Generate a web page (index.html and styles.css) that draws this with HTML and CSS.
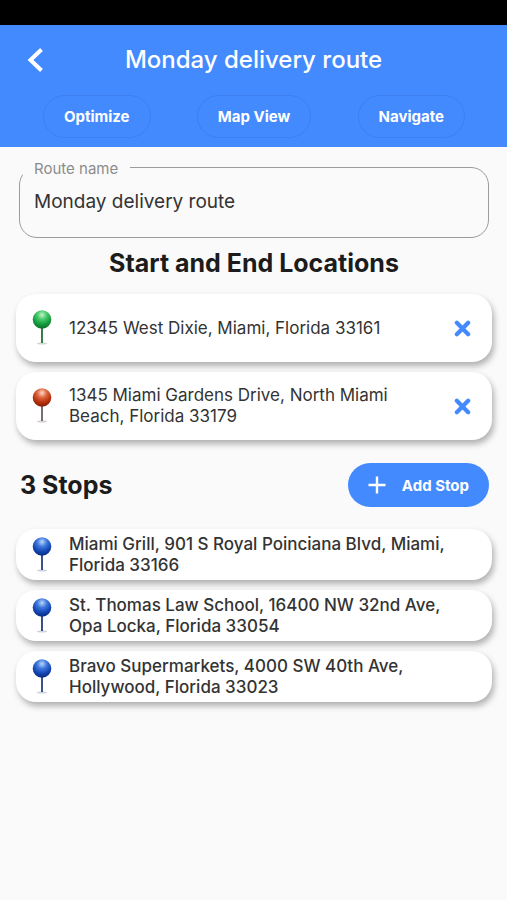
FILE: index.html
```html
<!DOCTYPE html>
<html lang="en">
<head>
<meta charset="utf-8">
<meta name="viewport" content="width=device-width, initial-scale=1">
<title>Monday delivery route</title>
<link rel="stylesheet" href="styles.css">
</head>
<body>
<svg class="defs" aria-hidden="true">
  <defs>
    <radialGradient id="ball-green" cx="0.5" cy="0.25" r="0.75">
      <stop offset="0" stop-color="#c5f3c8"/><stop offset="0.35" stop-color="#43c968"/><stop offset="0.7" stop-color="#149a3c"/><stop offset="1" stop-color="#0b6f29"/>
    </radialGradient>
    <radialGradient id="ball-red" cx="0.5" cy="0.25" r="0.75">
      <stop offset="0" stop-color="#ffd9c6"/><stop offset="0.35" stop-color="#dc6540"/><stop offset="0.7" stop-color="#b8300c"/><stop offset="1" stop-color="#7f1d05"/>
    </radialGradient>
    <radialGradient id="ball-blue" cx="0.5" cy="0.25" r="0.75">
      <stop offset="0" stop-color="#b9d6fb"/><stop offset="0.35" stop-color="#3e78dc"/><stop offset="0.7" stop-color="#1346b4"/><stop offset="1" stop-color="#082a80"/>
    </radialGradient>
    <symbol id="cross" viewBox="0 0 16 16">
      <path d="M2.7 2.7 13.3 13.3M13.3 2.7 2.7 13.3" fill="none" stroke="currentColor" stroke-width="4" stroke-linecap="round"/>
    </symbol>
  </defs>
</svg>
<div class="status-bar"></div>
<header class="header">
  <div class="title-row">
    <button class="back" type="button" aria-label="Back">
      <svg width="20" height="28" viewBox="0 0 20 28"><path d="M15.500 3.500 4.500 14l11 10.500" fill="none" stroke="currentColor" stroke-width="4"/></svg>
    </button>
    <h1 class="title">Monday delivery route</h1>
  </div>
  <nav class="actions">
    <button class="action" type="button">Optimize</button>
    <button class="action" type="button">Map View</button>
    <button class="action" type="button">Navigate</button>
  </nav>
</header>
<main class="content">
  <fieldset class="field">
    <legend class="field-legend"><label for="route-name">Route name</label></legend>
    <input class="field-input" id="route-name" type="text" value="Monday delivery route">
  </fieldset>

  <h2 class="heading heading-center">Start and End Locations</h2>
  <ul class="list">
    <li class="card card-tall">
      <svg class="pin" viewBox="0 0 20 36"><ellipse cx="10" cy="33.500" rx="5" ry="1" fill="#cfd6cf"/><path d="M10 17v16" stroke="#3c7a50" stroke-width="2"/><circle cx="10" cy="9.500" r="9.300" fill="url(#ball-green)"/></svg>
      <span class="address">12345 West Dixie, Miami, Florida 33161</span>
      <button class="remove" type="button" aria-label="Remove start location"><svg width="17" height="17"><use href="#cross"/></svg></button>
    </li>
    <li class="card card-tall">
      <svg class="pin" viewBox="0 0 20 36"><ellipse cx="10" cy="33.500" rx="5" ry="1" fill="#d3d0cf"/><path d="M10 17v16" stroke="#77706e" stroke-width="2"/><circle cx="10" cy="9.500" r="9.300" fill="url(#ball-red)"/></svg>
      <span class="address">1345 Miami Gardens Drive, North Miami Beach, Florida 33179</span>
      <button class="remove" type="button" aria-label="Remove end location"><svg width="17" height="17"><use href="#cross"/></svg></button>
    </li>
  </ul>

  <div class="stops-row">
    <h2 class="heading">3 Stops</h2>
    <button class="add" type="button">
      <svg width="18" height="18" viewBox="0 0 18 18"><path d="M9 0.500v17M0.500 9h17" stroke="currentColor" stroke-width="2.400"/></svg>
      Add Stop
    </button>
  </div>
  <ul class="list">
    <li class="card card-stop">
      <svg class="pin" viewBox="0 0 20 36"><ellipse cx="10" cy="33.500" rx="5" ry="1" fill="#cdd2dc"/><path d="M10 17v16" stroke="#3a518a" stroke-width="2"/><circle cx="10" cy="9.500" r="9.300" fill="url(#ball-blue)"/></svg>
      <span class="address">Miami Grill, 901 S Royal Poinciana Blvd, Miami, Florida 33166</span>
    </li>
    <li class="card card-stop">
      <svg class="pin" viewBox="0 0 20 36"><ellipse cx="10" cy="33.500" rx="5" ry="1" fill="#cdd2dc"/><path d="M10 17v16" stroke="#3a518a" stroke-width="2"/><circle cx="10" cy="9.500" r="9.300" fill="url(#ball-blue)"/></svg>
      <span class="address">St. Thomas Law School, 16400 NW 32nd Ave, Opa Locka, Florida 33054</span>
    </li>
    <li class="card card-stop">
      <svg class="pin" viewBox="0 0 20 36"><ellipse cx="10" cy="33.500" rx="5" ry="1" fill="#cdd2dc"/><path d="M10 17v16" stroke="#3a518a" stroke-width="2"/><circle cx="10" cy="9.500" r="9.300" fill="url(#ball-blue)"/></svg>
      <span class="address">Bravo Supermarkets, 4000 SW 40th Ave, Hollywood, Florida 33023</span>
    </li>
  </ul>
</main>
</body>
</html>
```
FILE: styles.css
```css
* { box-sizing: border-box; }

body {
  margin: 0;
  min-height: 100vh;
  background: #fafafa;
  color: #1c1c1c;
  font-family: Inter, "Liberation Sans", sans-serif;
}

button {
  font: inherit;
  border: 0;
  background: none;
  padding: 0;
  cursor: pointer;
}

svg { display: block; }

.defs { position: absolute; width: 0; height: 0; }

.status-bar { height: 25px; background: #000; }

.header {
  background: #448aff;
  color: #fff;
  padding: 17px 0 9px;
}

.title-row {
  display: grid;
  grid-template-columns: 48px 1fr 48px;
  align-items: center;
  padding: 0 12px;
}

.back {
  display: flex;
  justify-content: center;
  color: #fff;
}

.title {
  margin: 0;
  font-size: 24px;
  line-height: 36px;
  font-weight: 500;
  text-align: center;
}

.actions {
  display: flex;
  justify-content: space-between;
  padding: 17px 42px 0 43px;
}

.action {
  height: 43px;
  padding: 0 20px;
  border: 1px solid #3d7fef;
  border-radius: 22px;
  color: #fff;
  font-size: 15px;
  font-weight: 700;
}

.content { padding: 10px 15px 24px 16px; }

.field {
  margin: 0 3px;
  padding: 0 0 12px;
  border: 1px solid #9c9c9c;
  border-radius: 18px;
}

.field-legend {
  margin-left: 3px;
  padding: 4px 12px 0 11px;
  color: #8c8c8c;
  font-size: 15px;
  line-height: 16px;
}

.field-input {
  display: block;
  width: 100%;
  height: 48px;
  padding: 0 14px;
  border: 0;
  outline: 0;
  background: transparent;
  color: #333;
  font: inherit;
  font-size: 19px;
}

.heading {
  margin: 0;
  font-size: 25px;
  line-height: 30px;
  font-weight: 700;
}

.heading-center {
  padding: 10px 0 16px;
  text-align: center;
}

.list {
  display: flex;
  flex-direction: column;
  gap: 10px;
  margin: 0;
  padding: 0;
  list-style: none;
}

.card {
  display: flex;
  align-items: center;
  gap: 17px;
  padding: 0 21px 0 16px;
  border-radius: 20px;
  background: #fff;
  box-shadow: 2px 4px 6px rgba(0, 0, 0, 0.3);
  color: #333;
  font-size: 17px;
  line-height: 21px;
}

.card-tall { min-height: 68px; }

.card-stop {
  min-height: 51px;
  font-weight: 500;
}

.pin { flex: none; width: 20px; height: 36px; }

.address { flex: 1; }

.remove { color: #448aff; }

.stops-row {
  display: flex;
  align-items: center;
  justify-content: space-between;
  padding: 23px 3px 22px 4px;
}

.add {
  display: flex;
  align-items: center;
  gap: 16px;
  height: 44px;
  padding: 0 20px;
  border-radius: 22px;
  background: #448aff;
  color: #fff;
  font-size: 15px;
  font-weight: 700;
}
```
